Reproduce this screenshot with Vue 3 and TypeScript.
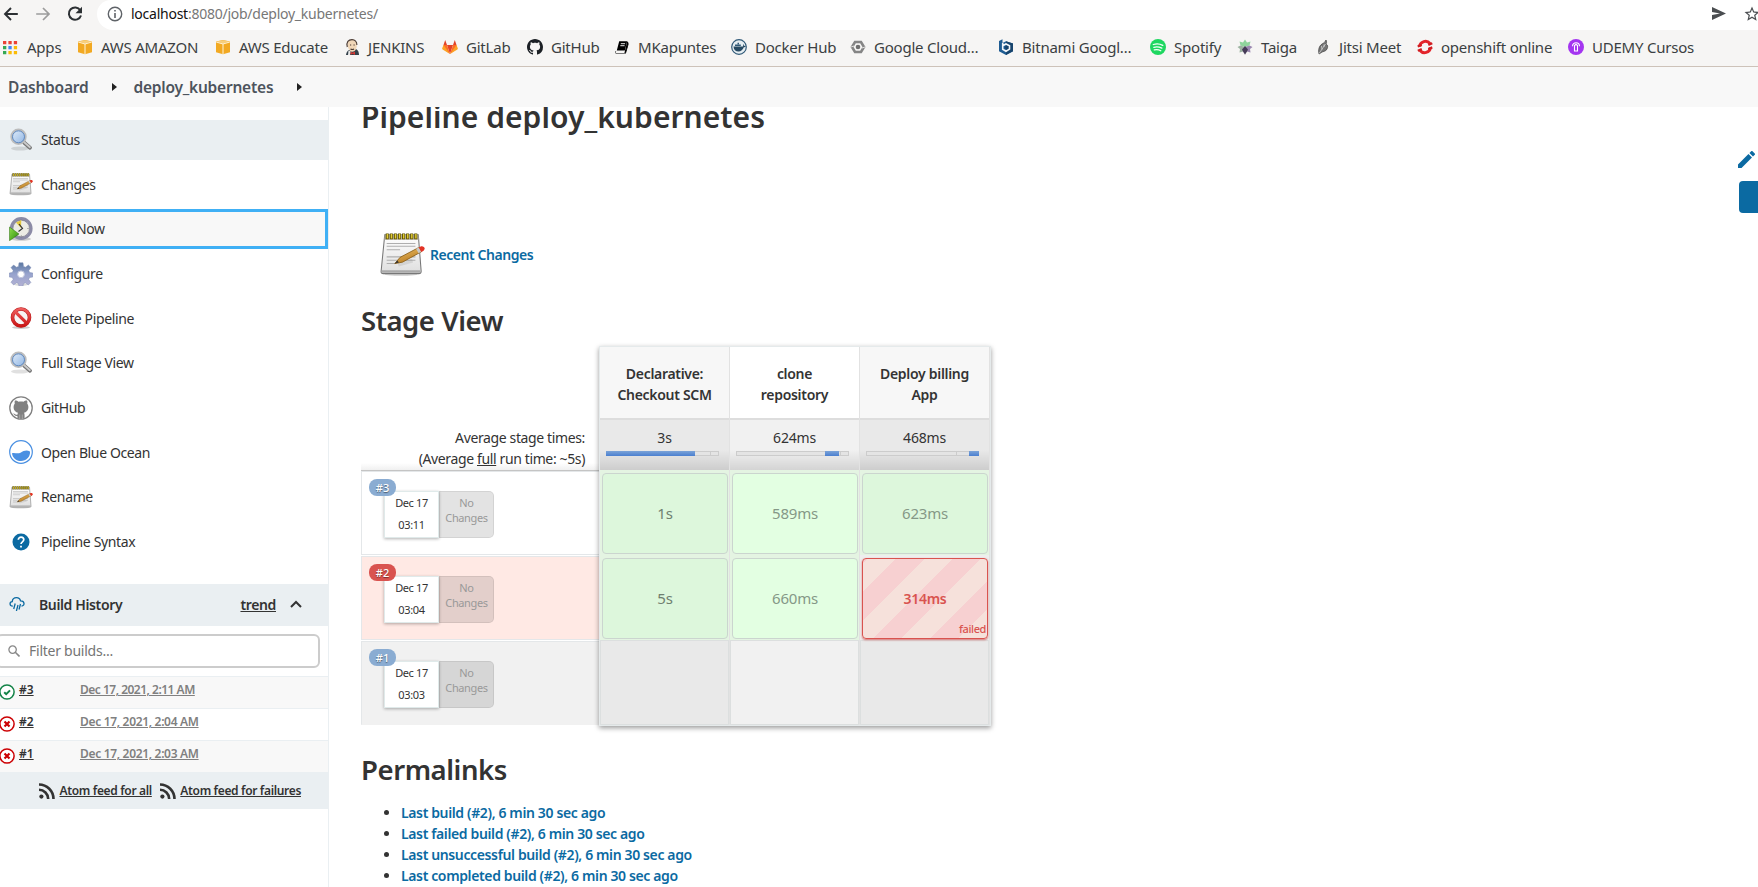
<script setup lang="ts">
interface Item { icon: string; label: string }

const bookmarks: Item[] = [
  { icon: 'apps', label: 'Apps' },
  { icon: 'aws', label: 'AWS AMAZON' },
  { icon: 'aws', label: 'AWS Educate' },
  { icon: 'jenkins', label: 'JENKINS' },
  { icon: 'gitlab', label: 'GitLab' },
  { icon: 'github', label: 'GitHub' },
  { icon: 'book', label: 'MKapuntes' },
  { icon: 'docker', label: 'Docker Hub' },
  { icon: 'gcloud', label: 'Google Cloud…' },
  { icon: 'bitnami', label: 'Bitnami Googl…' },
  { icon: 'spotify', label: 'Spotify' },
  { icon: 'taiga', label: 'Taiga' },
  { icon: 'jitsi', label: 'Jitsi Meet' },
  { icon: 'openshift', label: 'openshift online' },
  { icon: 'udemy', label: 'UDEMY Cursos' },
]

const tasks: (Item & { state?: string })[] = [
  { icon: 'search', label: 'Status', state: 'active' },
  { icon: 'notepad', label: 'Changes' },
  { icon: 'clock', label: 'Build Now', state: 'focused' },
  { icon: 'gear', label: 'Configure' },
  { icon: 'delete', label: 'Delete Pipeline' },
  { icon: 'search', label: 'Full Stage View' },
  { icon: 'octocat', label: 'GitHub' },
  { icon: 'ocean', label: 'Open Blue Ocean' },
  { icon: 'notepad', label: 'Rename' },
  { icon: 'help', label: 'Pipeline Syntax' },
]

const builds = [
  { id: '#3', ok: true, date: 'Dec 17, 2021, 2:11 AM' },
  { id: '#2', ok: false, date: 'Dec 17, 2021, 2:04 AM' },
  { id: '#1', ok: false, date: 'Dec 17, 2021, 2:03 AM' },
]

const stages = [
  { top: 'Declarative:', bottom: 'Checkout SCM', avg: '3s', start: 0, size: 80, tick: 93 },
  { top: 'clone', bottom: 'repository', avg: '624ms', start: 80, size: 12.5, tick: 93 },
  { top: 'Deploy billing', bottom: 'App', avg: '468ms', start: 93, size: 9, tick: 80 },
]

const runs = [
  { id: '#3', kind: 'good', time: '03:11', cells: ['1s', '589ms', '623ms'] },
  { id: '#2', kind: 'bad', time: '03:04', cells: ['5s', '660ms', '314ms'] },
  { id: '#1', kind: 'idle', time: '03:03', cells: ['', '', ''] },
]

const permalinks = [
  'Last build (#2), 6 min 30 sec ago',
  'Last failed build (#2), 6 min 30 sec ago',
  'Last unsuccessful build (#2), 6 min 30 sec ago',
  'Last completed build (#2), 6 min 30 sec ago',
]
</script>

<template>
  <svg class="defs" width="0" height="0" aria-hidden="true">
    <defs>
      <linearGradient id="paper" x1="0" y1="0" x2="0" y2="1"><stop offset="0" stop-color="#fff" /><stop offset="1" stop-color="#dedede" /></linearGradient>
      <linearGradient id="lens" x1="0" y1="0" x2="1" y2="1"><stop offset="0" stop-color="#e4effb" /><stop offset="1" stop-color="#8bb2e2" /></linearGradient>
      <linearGradient id="gearfill" gradientUnits="userSpaceOnUse" x1="0" y1="0" x2="0" y2="24"><stop offset="0" stop-color="#56759f" /><stop offset=".5" stop-color="#97a3cd" /><stop offset="1" stop-color="#b3b1d3" /></linearGradient>
      <linearGradient id="redfill" gradientUnits="userSpaceOnUse" x1="0" y1="2" x2="0" y2="22"><stop offset="0" stop-color="#f06060" /><stop offset="1" stop-color="#c80f0f" /></linearGradient>
      <linearGradient id="greenfill" x1="0" y1="0" x2="1" y2="1"><stop offset="0" stop-color="#8ee04a" /><stop offset="1" stop-color="#2c8a0c" /></linearGradient>
      <linearGradient id="pencilfill" x1="0" y1="0" x2=".5" y2="1"><stop offset="0" stop-color="#efc46a" /><stop offset="1" stop-color="#b87a20" /></linearGradient>
    </defs>
    <symbol id="apps" viewBox="0 0 16 16">
      <path fill="#ea4335" d="M1 2h3.300v3.300H1zM6.400 2h3.300v3.300H6.400zM11.800 2h3.300v3.300h-3.300z" /><path fill="#34a853" d="M1 7h3.300v3.300H1zM1 12h3.300v3.300H1z" /><path fill="#4285f4" d="M6.400 7h3.300v3.300H6.400z" /><path fill="#fbbc05" d="M11.800 7h3.300v3.300h-3.300zM6.400 12h3.300v3.300H6.400zM11.800 12h3.300v3.300h-3.300z" />
    </symbol>
    <symbol id="aws" viewBox="0 0 16 16">
      <path fill="#f2a922" d="M1 2.500 8 1l7 1.500v10.800L8 15.200 1 13.300z" /><path fill="#f7cf7d" d="m1.500 2.600 6.500 2 6.500-2L8 1.200z" /><path d="M8 4.700v10.300M1.200 3 8 5l6.800-2" stroke="#fff3d6" fill="none" />
    </symbol>
    <symbol id="jenkins" viewBox="0 0 16 16">
      <path fill="#33404a" d="M2 16c.5-4 3-5 3-5l7-1c2 1 3 3 3 6z" /><path fill="#f0d6b7" d="M3.500 5C3.500 2 5.500.8 8 .8c3 0 5 2 4.800 6-.1 3-1.800 6-4.300 6S3.500 9 3.500 5z" /><path fill="none" stroke="#4a3a32" stroke-width="1.100" d="M3.300 8C2 3 4.500.6 8 .6c3 0 5 2 4.900 5.500M6 6h1.200M9.500 6h1.200M6.500 10c1.500.8 2.500.6 3.500 0" /><path fill="#d33833" d="m6.500 12.500 2 1.200 2.500-1.200V16l-2.500-1.200L6.500 16z" /><path fill="#e8e8e8" d="m4.500 11.500 2 .5-.5 4H4z" />
    </symbol>
    <symbol id="gitlab" viewBox="0 0 16 16">
      <path fill="#e24329" d="M8 15 5 6h6z" /><path fill="#fc6d26" d="M8 15 .9 9.500 1.500 6H5zM8 15l7.100-5.500L14.500 6H11z" /><path fill="#fca326" d="M1.500 6 .2 9.200c-.1.500 0 .9.400 1.200L8 15zM14.500 6l1.300 3.200c.1.500 0 .9-.4 1.200L8 15z" /><path fill="#e24329" d="M1.500 6 3.200 1 5 6zM14.500 6l-1.700-5L11 6z" />
    </symbol>
    <symbol id="github" viewBox="0 0 16 16">
      <path fill="#1c2025" d="M8 0C3.580 0 0 3.580 0 8c0 3.540 2.290 6.530 5.470 7.590.4.070.55-.17.55-.38 0-.19-.01-.82-.01-1.490-2.010.37-2.530-.49-2.690-.94-.09-.23-.48-.94-.82-1.130-.28-.15-.68-.52-.01-.53.63-.01 1.080.58 1.230.82.72 1.210 1.870.87 2.330.66.070-.52.28-.87.51-1.070-1.780-.2-3.640-.89-3.640-3.950 0-.87.31-1.590.82-2.150-.08-.2-.36-1.020.08-2.120 0 0 .67-.21 2.200.82.64-.18 1.320-.27 2-.27.68 0 1.360.090 2 .27 1.530-1.040 2.200-.82 2.200-.82.44 1.100.16 1.920.080 2.120.51.56.82 1.270.82 2.150 0 3.070-1.870 3.750-3.650 3.950.29.25.54.73.54 1.480 0 1.070-.01 1.930-.01 2.200 0 .21.15.46.55.38A8.013 8.013 0 0 0 16 8c0-4.420-3.580-8-8-8z" />
    </symbol>
    <symbol id="book" viewBox="0 0 16 16">
      <path fill="#000" d="M5.200 2.200h8L10.800 11.500H2.800zM2.300 12.300 1.500 14h9.700l2.800-9.600.5 1-2.600 9H1.800c-.7-.2-.8-1.200-.3-2.100z" /><path fill="#000" d="M13.200 2.200 11 11.500l-.6 2.500h1.200L14.600 4z" /><path d="M6.800 4.700h4.300M6.300 6.700h4.300" stroke="#fff" stroke-width=".9" /><path d="M2.500 12.700h7.800" stroke="#f6f5f4" stroke-width=".8" />
    </symbol>
    <symbol id="docker" viewBox="0 0 16 16">
      <circle cx="8" cy="8" r="7.300" fill="#e6eef2" stroke="#315a78" stroke-width="1.200" /><path fill="#274a63" d="M2.500 7.500h9.500c.3-1 .3-1.500 0-2.300 1 .3 1.300 1 1.300 1.800.8-.1 1.200 0 1.500.3-.7.900-1.300 1-2 1-1 2.700-2.700 4.200-5.300 4.200-3 0-4.800-1.600-5-5z" /><path fill="#315a78" d="M4 5.500h5.800V7H4zM6.500 3.800H8v1.400H6.500z" />
    </symbol>
    <symbol id="gcloud" viewBox="0 0 16 16">
      <path fill="none" stroke="#858585" stroke-width="2.600" d="M5 3h6l3 5-3 5H5L2 8z" /><circle cx="8" cy="8" r="2.300" fill="#6e6e6e" /><path stroke="#f6f5f4" stroke-width=".8" d="m1 8 3-1M15 8l-3 1" />
    </symbol>
    <symbol id="bitnami" viewBox="0 0 16 16">
      <path fill="#1f5c92" d="M1 2 4.500.3V4L8 2.200 15 4.500v7.700L8 16l-7-3.700z" /><path fill="#17446d" d="M8 2.200 15 4.500v7.700L8 16v-4z" /><path fill="none" stroke="#f3f6f9" stroke-width="1.600" d="M4.700 4v6.200L8 12.200l3.500-2.100V6.800L8 5 4.700 6.800" /><circle cx="8" cy="8.500" r="1.200" fill="#17446d" />
    </symbol>
    <symbol id="spotify" viewBox="0 0 16 16">
      <circle cx="8" cy="8" r="8" fill="#1ed760" /><path d="M3.300 5.500c3.300-1 6.700-.7 9.500.9M3.800 8.300c2.800-.8 5.500-.4 8 .8M4.300 10.900c2.400-.6 4.500-.3 6.500.8" stroke="#f5fff8" stroke-width="1.300" stroke-linecap="round" fill="none" />
    </symbol>
    <symbol id="taiga" viewBox="0 0 16 16">
      <path fill="#8fd49c" d="m8 .5 2 3 3.500-1-1 4L8 8 3.500 6.500l-1-4L6 3.500z" /><path fill="#9a87b0" d="M15.500 8 13 10l.5 3.500-3.500-1L8 8l4.500-1.500z" /><path fill="#9cb3a0" d="M.5 8 3 10l-.5 3.500 3.500-1L8 8 3.500 6.500z" /><path fill="#463b58" d="m8 15.800-2-3.300-1-2L8 7l3 3.500-1 2z" />
    </symbol>
    <symbol id="jitsi" viewBox="0 0 16 16">
      <path fill="#757575" stroke="#3f3f3f" stroke-width=".7" d="M4 15c-1-4 0-8 3-10 2-1 3-2 4-4 1 2 .5 3 0 4 2 1 2 3 1 5-1.500 3-4 2-5.500 3.500C5.500 14 5 14.500 4 15z" /><path d="M4 14.500 10.500 5M6.500 7l.5 3.500M9 5.500V8" stroke="#ddd" stroke-width=".7" fill="none" />
    </symbol>
    <symbol id="openshift" viewBox="0 0 16 16">
      <path fill="none" stroke="#e3242b" stroke-width="3" d="M13 4.500A6 6 0 0 0 2.500 7.500M3 11.500A6 6 0 0 0 13.500 8.500" /><path stroke="#d01c20" stroke-width="2.300" d="m.7 7.500 4-1.600M.8 11.700l4-1.600M11.300 5.900l4-1.600M11.300 10l4-1.600" />
    </symbol>
    <symbol id="udemy" viewBox="0 0 16 16">
      <circle cx="8" cy="8" r="8" fill="#a435f0" /><path d="M4.500 7.200C4.500 2.500 11.500 2.500 11.500 7.200M6.500 12V6.500L8 5.300l1.500 1.200V12z" fill="none" stroke="#fff" stroke-width="1.100" />
    </symbol>
    <symbol id="search" viewBox="0 0 24 24">
      <ellipse cx="11" cy="20.500" rx="9" ry="2" fill="#000" opacity=".12" /><path d="m15 14.500 6 5.200" stroke="#777" stroke-width="3.800" stroke-linecap="round" /><path d="m15.200 14.200 5.700 5" stroke="#ccc" stroke-width="1.800" stroke-linecap="round" /><circle cx="9.500" cy="8.800" r="7.200" fill="url(#lens)" stroke="#bcbcbc" stroke-width="2" /><circle cx="9.500" cy="8.800" r="6" fill="none" stroke="#5e87bd" stroke-width="1" />
    </symbol>
    <symbol id="notepad" viewBox="0 0 48 48">
      <ellipse cx="23" cy="45" rx="17" ry="2" fill="#000" opacity=".15" /><path d="M6 4h35l3 38c0 2-1 2.500-2.500 2.500h-37C3 44.500 2 44 2.200 42z" fill="url(#paper)" stroke="#777" stroke-width="1.100" /><path d="M6 4h35l.4 5H5.600z" fill="#b4ae9e" /><path d="M3 41h40v2.500H3z" fill="#aaa" /><path d="M8 13h30M8 16h30M8 19.500h14M8 27h30M8 30.500h30M8 34h9" stroke="#aeaeae" stroke-width="1.100" /><path d="M7 5.500h33" stroke="#5e5200" stroke-width="6" stroke-dasharray="3.200 1.050" /><path d="M8 5.500h32" stroke="#e3cd35" stroke-width="4.800" stroke-dasharray="1.500 2.750" /><path d="m20 35 15-4" stroke="#888" stroke-width="4" opacity=".2" /><path d="m16.500 34 5.500-6.500L41 17.500c2.500-1 5.500 1 3.500 4L24.500 32.500z" fill="url(#pencilfill)" stroke="#8a5f18" stroke-width=".9" /><path d="m16.500 34 2.600-3.100 1.700 2z" fill="#333" /><path d="m38.700 18.600 3-1.500 2.600 4.300-3 1.700z" fill="#c8c8c8" /><path d="m41.500 17.200 2.500-1.300c3-.5 5 2.500 2.500 4.600l-2.400 1.300z" fill="#e33325" />
    </symbol>
    <symbol id="clock" viewBox="0 0 24 24">
      <ellipse cx="12" cy="22" rx="10" ry="1.700" fill="#000" opacity=".18" /><circle cx="12.200" cy="11.500" r="10" fill="#ecebe4" stroke="#8c8ba6" stroke-width="2.800" /><circle cx="12.200" cy="11.500" r="8.300" fill="none" stroke="#5f5e78" stroke-width=".6" /><path d="M12 11 7 5.500 12.300 3z" fill="#e4c93f" /><path d="m10 7 3.500 4.500-4 3" stroke="#333" stroke-width="1.200" fill="none" /><path d="M18.500 11.500h1M12.300 18.500v1" stroke="#777" /><path d="M.5 10 10 17 .5 23.700z" fill="url(#greenfill)" stroke="#286d0b" stroke-width=".5" />
    </symbol>
    <symbol id="gear" viewBox="0 0 24 24">
      <ellipse cx="12" cy="22.500" rx="7" ry="1.500" fill="#000" opacity=".15" />
      <path fill="url(#gearfill)" stroke="#7f8cb5" stroke-width=".5" d="M10 .8h4l.5 3.600 2 .8 2.900-2.200 2.600 2.600-2.200 2.900.8 2 3.200.5v4l-3.300.5-.8 2 2.200 2.900-2.600 2.600-2.900-2.200-2 .8-.4 2.700h-4l-.5-2.800-2-.8-2.900 2.200L2 20.300l2.200-2.900-.8-2L.3 15v-4l3.100-.5.8-2L2 5.600 4.600 3l2.900 2.200 2-.8z" /><circle cx="12" cy="12.300" r="3.400" fill="#fff" stroke="#c2c7dd" />
    </symbol>
    <symbol id="delete" viewBox="0 0 24 24">
      <ellipse cx="12" cy="21.500" rx="9" ry="1.500" fill="#000" opacity=".2" /><circle cx="12" cy="11.500" r="8.500" fill="#f7f5f5" stroke="#b51a1a" stroke-width="3.600" /><circle cx="12" cy="11.500" r="8.500" fill="none" stroke="url(#redfill)" stroke-width="2.600" /><path d="m6 5.700 12 11.600" stroke="url(#redfill)" stroke-width="3.200" />
    </symbol>
    <symbol id="octocat" viewBox="0 0 24 24">
      <circle cx="12" cy="12" r="11.200" fill="#fff" stroke="#808080" stroke-width="1.300" /><path fill="#808080" d="M6 4.500c1.500 0 2.700.6 3.500 1.200 1.600-.4 3.400-.4 5 0 .8-.6 2-1.200 3.500-1.200.5 1.200.5 2.200.2 3 2.300 3 1.300 8.300-3.200 9.300.6.900.6 2 .6 5.500-2.300.8-5 .8-7.200 0V20c-2.700.5-3.200-1.500-4.400-2.500 2-.2 2.400 1.500 4.400 1.300.1-.8.3-1.500.6-2C4.500 15.800 3.500 10.500 5.800 7.500c-.3-.8-.3-1.800.2-3z" /><path stroke="#b5b5b5" stroke-width=".7" d="M10.700 18.500V23M13.300 18.500V23" />
    </symbol>
    <symbol id="ocean" viewBox="0 0 24 24">
      <circle cx="12" cy="12" r="11.300" fill="#fff" stroke="#4a90e2" stroke-width="1.200" /><path fill="#4a90e2" d="M3 13.200c3-.8 5.200 1 8.500-.5 3.500-2 6-3 9.500-1.200.5 5.500-4 9.500-9 9.500s-8.700-3.500-9-7.800z" />
    </symbol>
    <symbol id="help" viewBox="0 0 24 24">
      <circle cx="12" cy="12" r="8.500" fill="#0b6aa2" /><path d="M9.300 9.800c0-3.600 5.500-3.600 5.500 0 0 2-2.800 2.100-2.800 4.300" stroke="#fff" stroke-width="1.700" fill="none" /><path d="M11.100 15.700h1.800v1.800h-1.800z" fill="#fff" />
    </symbol>
    <symbol id="rss" viewBox="0 0 16 16">
      <circle cx="2.400" cy="13.600" r="2.100" fill="#333" /><path d="M0 6.800c5 0 9.200 4.200 9.200 9.200M0 1.500c8 0 14.500 6.500 14.500 14.500" fill="none" stroke="#333" stroke-width="2.600" />
    </symbol>
  </svg>

  <div class="page">
    <header class="toolbar">
      <svg class="nav" viewBox="0 0 18 18"><path d="M15.800 9H3.200M9 3 3 9l6 6" fill="none" stroke="#2c3033" stroke-width="1.900" /></svg>
      <svg class="nav" viewBox="0 0 18 18"><path d="M2.200 9h12.600M9 3l6 6-6 6" fill="none" stroke="#9c9c9c" stroke-width="1.700" /></svg>
      <svg class="nav" viewBox="0 0 18 18"><path d="M14.300 5.200A6.200 6.200 0 1 0 15 10.500" fill="none" stroke="#2c3033" stroke-width="2" /><path d="M16 1.800v6.500H9.500z" fill="#2c3033" /></svg>
      <div class="omnibox">
        <svg class="info" viewBox="0 0 16 16"><circle cx="8" cy="8" r="6.700" fill="none" stroke="#5f6368" stroke-width="1.400" /><path d="M7.200 7h1.600v5H7.200zM7.200 4h1.600v1.600H7.200z" fill="#5f6368" /></svg>
        <span class="url"><span class="host">localhost</span>:8080/job/deploy_kubernetes/</span>
        <svg class="send" viewBox="0 0 14 13"><path d="M0 0 14 6.500 0 13V8l8-1.500L0 5z" fill="#4a4d50" /></svg>
        <svg class="star" viewBox="0 0 24 24"><path fill="#4a4d50" d="m22 9.240-7.190-.62L12 2 9.190 8.630 2 9.240l5.460 4.730L5.820 21 12 17.270 18.180 21l-1.630-7.030zM12 15.400l-3.760 2.270 1-4.280-3.320-2.880 4.380-.38L12 6.100l1.710 4.040 4.380.38-3.320 2.880 1 4.280z" /></svg>
      </div>
    </header>

    <nav class="bookmarks">
      <a v-for="b in bookmarks" :key="b.label" class="bookmark">
        <svg class="favicon"><use :href="'#' + b.icon" /></svg><span>{{ b.label }}</span>
      </a>
    </nav>

    <nav class="crumbs">
      <a class="crumb">Dashboard</a>
      <svg class="caret" viewBox="0 0 5 8"><path d="M0 0 5 4 0 8z" fill="#222" /></svg>
      <a class="crumb">deploy_kubernetes</a>
      <svg class="caret" viewBox="0 0 5 8"><path d="M0 0 5 4 0 8z" fill="#222" /></svg>
    </nav>

    <div class="body">
      <aside class="side">
        <div class="tasks">
          <a v-for="t in tasks" :key="t.label" class="task" :class="t.state">
            <svg class="task-icon"><use :href="'#' + t.icon" /></svg><span>{{ t.label }}</span>
          </a>
        </div>
        <section class="history">
          <div class="history-head">
            <svg class="cloud" viewBox="0 0 16 14"><path d="M3.800 9.200C.3 9 .2 5 3.200 4.700 3.500 1.500 5.500.7 7.500.7c2.200 0 3.600 1.300 4 3.200 4.300-.2 4.700 5 1 5.300" fill="none" stroke="#0b6aa2" stroke-width="1.300" /><path d="M6.200 6.500 4.700 12M9 8l-1.600 6M11.500 7 10 12.500" stroke="#0b6aa2" stroke-width="1.300" /></svg>
            <span class="history-title">Build History</span>
            <a class="trend">trend</a>
            <svg class="chevron" viewBox="0 0 12 8"><path d="m1 7 5-5 5 5" fill="none" stroke="#333" stroke-width="2" /></svg>
          </div>
          <div class="filter-wrap">
            <div class="filter">
              <svg class="glass" viewBox="0 0 12 12"><circle cx="4.600" cy="4.600" r="3.700" fill="none" stroke="#888" stroke-width="1.300" /><path d="m7.300 7.300 4.200 4.200" stroke="#888" stroke-width="1.600" /></svg>
              <span>Filter builds...</span>
            </div>
          </div>
          <div v-for="b in builds" :key="b.id" class="build">
            <svg class="ball" viewBox="0 0 16 16">
              <circle cx="8" cy="8" r="7.100" fill="#fff" :stroke="b.ok ? '#138347' : '#cc0003'" stroke-width="1.500" />
              <path v-if="b.ok" d="m5.200 8.200 2 2 3.800-3.800" fill="none" stroke="#138347" stroke-width="2" />
              <path v-else d="m5.500 5.500 5 5M10.500 5.500l-5 5" stroke="#cc0003" stroke-width="2.200" />
            </svg>
            <a class="build-id">{{ b.id }}</a>
            <a class="build-date" :class="{ snug: b.ok }">{{ b.date }}</a>
          </div>
          <div class="feeds">
            <svg class="rss"><use href="#rss" /></svg><a class="feed">Atom feed for all</a>
            <svg class="rss"><use href="#rss" /></svg><a class="feed">Atom feed for failures</a>
          </div>
        </section>
      </aside>

      <main class="main">
        <div class="content">
          <h1 class="title">Pipeline deploy_kubernetes</h1>
          <div class="recent"><svg class="recent-icon"><use href="#notepad" /></svg><a class="link">Recent Changes</a></div>
          <h2 class="heading stage">Stage View</h2>

          <div class="stage-view">
            <div class="runs">
              <div class="averages"><span>Average stage times:</span><span>(Average <u>full</u> run time: ~5s)</span></div>
              <div v-for="r in runs" :key="r.id" class="run" :class="r.kind">
                <div class="run-boxes">
                  <div class="run-date"><span>Dec 17</span><span>{{ r.time }}</span></div>
                  <div class="run-changes">No<br>Changes</div>
                </div>
                <span class="badge">{{ r.id }}</span>
              </div>
            </div>
            <div class="stages">
              <div v-for="(s, i) in stages" :key="s.avg" class="stage-col">
                <div class="stage-name"><span>{{ s.top }}</span><span>{{ s.bottom }}</span></div>
                <div class="stage-avg">
                  <span>{{ s.avg }}</span>
                  <div class="meter">
                    <i class="tick" :style="{ left: s.tick + '%' }"></i>
                    <i class="fill" :style="{ left: s.start + '%', width: s.size + '%' }"></i>
                  </div>
                </div>
                <div v-for="r in runs" :key="r.id" class="slot" :class="{ empty: !r.cells[i], failing: r.kind === 'bad' && i === 2 }">
                  <div v-if="r.cells[i]" class="cell" :class="{ light: r.cells[i].endsWith('ms') }"><span>{{ r.cells[i] }}</span><em v-if="r.kind === 'bad' && i === 2">failed</em></div>
                </div>
              </div>
            </div>
          </div>

          <h2 class="heading perma">Permalinks</h2>
          <ul class="links"><li v-for="p in permalinks" :key="p"><a class="link">{{ p }}</a></li></ul>
        </div>
        <div class="actions">
          <svg class="pencil" viewBox="3 3 18 18"><path fill="#0b6aa2" d="M3 17.250V21h3.750L17.810 9.940l-3.750-3.750zM20.710 7.040a1 1 0 0 0 0-1.410l-2.340-2.340a1 1 0 0 0-1.410 0l-1.830 1.830 3.750 3.750z" /></svg>
          <div class="blue-button"></div>
        </div>
      </main>
    </div>
  </div>
</template>

<style>
html, body { margin: 0; overflow: hidden; background: #fff; }
</style>

<style scoped>
.defs { position: absolute; }
.page { width: 1758px; height: 887px; overflow: hidden; display: flex; flex-direction: column; background: #fff; color: #333; font: 14px/21px "Noto Sans", sans-serif; letter-spacing: -.37px; box-sizing: border-box; }
.page * { box-sizing: border-box; }
.page svg { display: block; flex: none; }
.page span, .page a { white-space: nowrap; }

.toolbar { height: 30px; flex: none; display: flex; background: #f6f5f4; padding-left: 2px; }
.nav { width: 18px; height: 18px; margin: 5px 14px 0 0; }
.omnibox { flex: 1; height: 30px; background: #fff; border-radius: 14px 0 0 16px; display: flex; align-items: center; padding: 0 0 3px 10px; margin-left: -1px; }
.info { width: 16px; height: 16px; }
.url { margin-left: 8px; font-size: 14px; letter-spacing: -.25px; color: #777; }
.host { color: #111; }
.send { width: 14px; height: 13px; margin-left: auto; }
.star { width: 18px; height: 18px; margin: 0 -3px 0 17px; }

.bookmarks { height: 37px; flex: none; background: #f6f5f4; border-bottom: 1px solid #cdc2b9; display: grid; align-items: center; padding: 0 0 2px 2px; grid-template-columns: 75px 138px 129px 98px 85px 87px 117px 119px 148px 152px 87px 78px 102px 151px 190px; color: #3b3f42; font-size: 15px; letter-spacing: -.22px; }
.bookmark { display: flex; align-items: center; gap: 8px; }
.bookmark:first-child { gap: 9px; }
.favicon { width: 16px; height: 16px; }

.crumbs { height: 40px; flex: none; display: flex; align-items: center; background: #f8f8f8; padding-left: 8px; color: #4d545d; font-size: 15.500px; font-weight: 600; letter-spacing: -.22px; }
.caret { width: 5px; height: 8px; margin: 0 16px 0 24px; }

.body { flex: 1; display: flex; min-height: 0; }
.side { width: 329px; flex: none; border-right: 1px solid #eaeff2; }
.tasks { padding-top: 13px; display: flex; flex-direction: column; gap: 4.680px; }
.task { height: 40px; display: flex; align-items: center; gap: 8px; padding: 0 0 1px 9px; }
.task-icon { width: 24px; height: 24px; }
.active { background: #eaeff2; }
.focused { background: #f8f8f8; border: 3px solid #40b0f5; border-left: 0; }

.history { margin-top: 22px; }
.history-head { height: 42px; background: #eaeff2; display: flex; align-items: center; padding: 0 0 2px 9px; font-weight: 600; }
.cloud { width: 16px; height: 14px; }
.history-title { margin-left: 14px; }
.trend { margin-left: auto; text-decoration: underline; }
.chevron { width: 12px; height: 8px; margin: 0 26px 0 14px; }
.filter-wrap { height: 50px; padding-top: 8px; }
.filter { width: 324px; height: 34px; margin-left: -4px; border: 2px solid #ccc; border-radius: 6px; display: flex; align-items: center; gap: 9px; padding: 0 0 1px 10px; color: #757575; letter-spacing: -.25px; }
.glass { width: 12px; height: 12px; }
.build { height: 32px; border-top: 1px solid #eaeff2; display: flex; padding-top: 2px; font-size: 12px; font-weight: 600; letter-spacing: -.32px; }
.build:nth-child(odd) { background: #f8f8f8; }
.ball { width: 16px; height: 16px; margin: 5px 0 0 -1px; }
.build-id { margin-left: 4px; width: 61px; text-decoration: underline; letter-spacing: 0; }
.build-date { color: #808080; text-decoration: underline; }
.build-date.snug { letter-spacing: -.5px; }
.feeds { height: 37px; background: #eaeff2; display: flex; align-items: center; padding-left: 39px; font-size: 12px; font-weight: 600; letter-spacing: -.34px; }
.rss { width: 16px; height: 16px; }
.feed { margin: 0 8px 0 4.500px; text-decoration: underline; }

.main { flex: 1; display: flex; justify-content: space-between; overflow: hidden; }
.content { padding-left: 32px; }
.title, .heading { margin: 0; font-size: 27.500px; line-height: 38px; font-weight: 600; letter-spacing: -.43px; }
.title { margin-top: -9px; font-size: 30px; letter-spacing: .05px; }
.recent { margin-top: 95px; padding-left: 18px; height: 46px; display: flex; align-items: center; gap: 5px; letter-spacing: -.45px; }
.recent-icon { width: 46px; height: 46px; }
.link { color: #0b6aa2; font-weight: 600; }
.stage { margin-top: 25px; }
.perma { margin-top: 25px; }

.stage-view { display: flex; margin-top: 6px; height: 380px; }
.runs { width: 238px; display: flex; flex-direction: column; }
.averages { height: 125px; flex: none; display: flex; flex-direction: column; align-items: flex-end; justify-content: flex-end; padding: 0 14px 1px 0; background: linear-gradient(#fff 117px, #f0f0f0); border-bottom: 1px solid #c4c4c4; }
.run { height: 84px; flex: none; margin-bottom: 1px; border: 1px solid #e4e7e9; border-right: 0; position: relative; padding: 19px 0 0 22px; }
.bad { background: #ffe9e4; }
.idle { background: #f1f1f1; border-bottom-color: #f1f1f1; }
.run-boxes { display: flex; font-size: 11px; text-align: center; }
.run-date { width: 55px; height: 47px; background: #fff; border: 1px solid #e0eaea; box-shadow: 0 1px 3px rgba(0, 0, 0, .3); display: flex; flex-direction: column; line-height: 22px; z-index: 1; }
.run-changes { width: 55px; height: 47px; border-radius: 0 5px 5px 0; background: rgba(0, 0, 0, .11); border: 1px solid rgba(0, 0, 0, .07); line-height: 15px; padding-top: 3px; color: #999; }
.badge { position: absolute; left: 7px; top: 7px; width: 27px; height: 17px; border-radius: 8px; background: #8aacd2; color: #fff; font-size: 11px; line-height: 17px; font-weight: 500; letter-spacing: 0; text-align: center; text-shadow: 0 1px 1px rgba(0, 0, 0, .45); z-index: 2; }
.bad .badge { background: #d9534f; }
.stages { width: 392px; height: 380px; display: flex; border: 1px solid #e5eaeb; background: #e9e9e9; box-shadow: 0 2px 5px rgba(0, 0, 0, .4); position: relative; z-index: 3; }
.stage-col { width: 130px; border-right: 1px solid #e2e2e2; display: flex; flex-direction: column; background: #e9e9e9; }
.stage-col:nth-child(2) { background: #f1f1f1; }
.stage-name { height: 73px; border-bottom: 2px solid #ddd; background: #f7f7f7; font-weight: 600; letter-spacing: -.3px; text-align: center; display: flex; flex-direction: column; justify-content: center; padding-top: 2px; }
.stage-col:nth-child(2) .stage-name { background: #fff; }
.stage-avg { height: 50px; text-align: center; padding-top: 7px; letter-spacing: -.2px; background: linear-gradient(transparent 60%, rgba(0, 0, 0, .12)); }
.meter { position: relative; width: 113px; height: 5px; margin: 3px 0 0 6px; border: 1px solid #ccc; background: #e4e4e4; }
.fill, .tick { position: absolute; top: -1px; height: 5px; }
.fill { background: linear-gradient(#7ba3d8, #4a7fd0); margin-left: -1px; }
.tick { width: 1px; background: #ccc; }
.slot { height: 85px; padding: 3px 1px 1px 2px; background: #e4f4e2; }
.slot.empty { border: 1px solid #dcdfdf; background: none; }
.cell { height: 81px; border: 1px solid #cbd5cf; border-radius: 4px; background: #ddf7dc; display: flex; align-items: center; justify-content: center; color: #6f7f70; font-size: 15px; letter-spacing: -.2px; padding-bottom: 1px; }
.cell.light { color: #859887; }
.stage-col:nth-child(2) .cell { background: #e3ffe2; }
.slot.failing { background: #eee; }
.failing .cell { position: relative; border: 1px solid #d9534f; color: #d9534f; font-weight: 600; font-size: 14px; letter-spacing: -.3px; background: repeating-linear-gradient(135deg, #f7d0d1 0 3.300px, #f6e1db 3.300px 23.300px, #f7d0d1 23.300px 40px); box-shadow: 0 1px 2px rgba(200, 30, 30, .6); }
.failing em { position: absolute; right: 1px; bottom: 0; font-size: 11px; line-height: 18px; font-style: normal; font-weight: 500; letter-spacing: -.4px; }

.links { margin: 13px 0 0; padding-left: 40px; }
.links li { height: 21px; }
.actions { width: 20px; display: flex; flex-direction: column; padding-top: 44px; }
.pencil { width: 17px; height: 17px; }
.blue-button { width: 30px; height: 32px; margin: 13px 0 0 1px; border-radius: 4px; background: #0b6aa2; }
</style>
